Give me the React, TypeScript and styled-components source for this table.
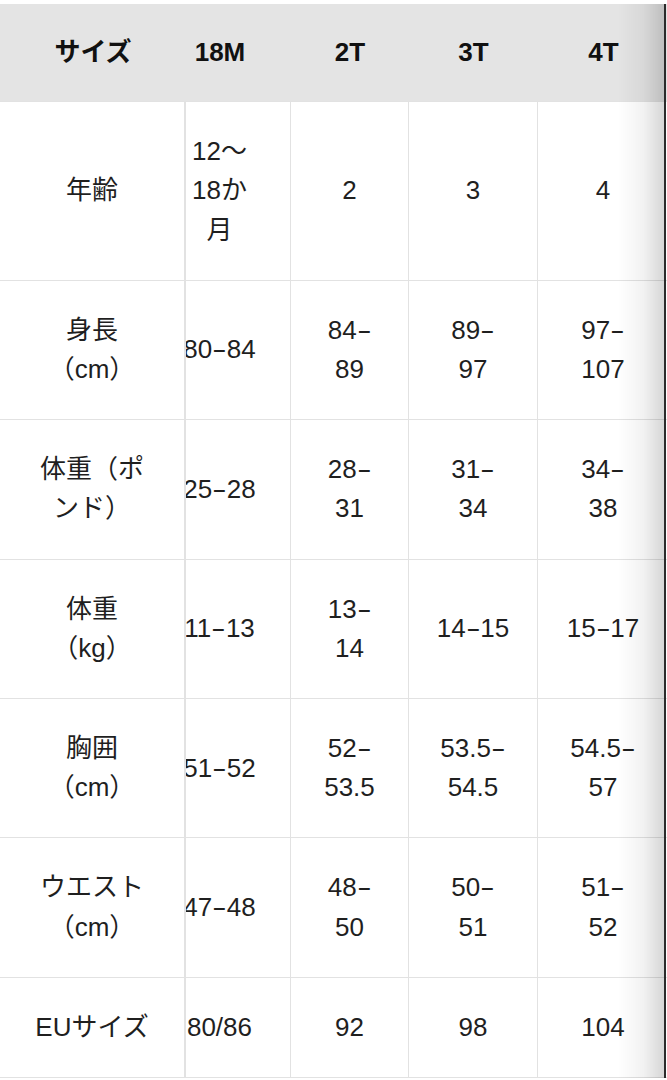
import React, { useLayoutEffect, useRef } from "react";
import styled, { createGlobalStyle, css } from "styled-components";

const GlobalStyle = createGlobalStyle`
  html, body {
    margin: 0;
    padding: 0;
    background: #ffffff;
  }
  body {
    font-family: "Liberation Sans", "Noto Sans CJK JP", sans-serif;
    color: #1f1f1f;
  }
`;

const Page = styled.div`
  padding-top: 4px;
  width: 667px;
`;

const Frame = styled.div`
  position: relative;
  width: 667px;
`;

const Scroller = styled.div`
  overflow-x: auto;
  overflow-y: hidden;
  scrollbar-width: none;
  &::-webkit-scrollbar {
    display: none;
  }
`;

const Table = styled.table`
  table-layout: fixed;
  width: 706px;
  border-collapse: separate;
  border-spacing: 0;
  font-size: 26px;
  line-height: 39.2px;
`;

const stickyCol = css`
  position: sticky;
  left: 0;
  z-index: 2;
`;

const HeadCell = styled.th<{ $sticky?: boolean }>`
  background: #e4e4e4;
  color: #111111;
  font-weight: 700;
  padding: 29px 0;
  text-align: center;
  vertical-align: middle;
  white-space: nowrap;
  ${(p) => p.$sticky && stickyCol}
`;

const BodyCell = styled.td<{ $sticky?: boolean; $last?: boolean }>`
  background: #ffffff;
  padding: 30px 0;
  text-align: center;
  vertical-align: middle;
  border-top: 1px solid #e2e2e2;
  border-right: ${(p) => (p.$sticky ? "2px" : "1px")} solid #e2e2e2;
  ${(p) => p.$last && "border-bottom: 1px solid #e2e2e2;"}
  ${(p) => p.$sticky && stickyCol}
`;

const Line = styled.span`
  display: block;
  white-space: nowrap;
`;

const Dash = styled.span`
  display: inline-block;
  margin: 0 3px;
  transform: scaleX(1.7);
`;

const EdgeShade = styled.div`
  position: absolute;
  top: 0;
  right: 1px;
  bottom: 0;
  width: 46px;
  pointer-events: none;
  background: linear-gradient(
    to right,
    rgba(0, 0, 0, 0) 0%,
    rgba(0, 0, 0, 0.05) 55%,
    rgba(0, 0, 0, 0.16) 100%
  );
  border-right: 2px solid #2b2b2b;
  z-index: 3;
`;

type Row = { label: string[]; values: string[][] };

const sizes = ["18M", "2T", "3T", "4T"];

const rows: Row[] = [
  { label: ["年齢"], values: [["12〜", "18か", "月"], ["2"], ["3"], ["4"]] },
  { label: ["身長", "（cm）"], values: [["80-84"], ["84-", "89"], ["89-", "97"], ["97-", "107"]] },
  { label: ["体重（ポ", "ンド）"], values: [["25-28"], ["28-", "31"], ["31-", "34"], ["34-", "38"]] },
  { label: ["体重", "（kg）"], values: [["11-13"], ["13-", "14"], ["14-15"], ["15-17"]] },
  { label: ["胸囲", "（cm）"], values: [["51-52"], ["52-", "53.5"], ["53.5-", "54.5"], ["54.5-", "57"]] },
  { label: ["ウエスト", "（cm）"], values: [["47-48"], ["48-", "50"], ["50-", "51"], ["51-", "52"]] },
  { label: ["EUサイズ"], values: [["80/86"], ["92"], ["98"], ["104"]] },
];

const colWidths = [186, 142, 118, 129, 131];

function withDashes(text: string) {
  const parts = text.split("-");
  return parts.map((part, i) => (
    <React.Fragment key={i}>
      {part}
      {i < parts.length - 1 && <Dash>-</Dash>}
    </React.Fragment>
  ));
}

export default function App() {
  const scrollRef = useRef<HTMLDivElement>(null);

  useLayoutEffect(() => {
    if (scrollRef.current) scrollRef.current.scrollLeft = 37;
  }, []);

  return (
    <>
      <GlobalStyle />
      <Page>
        <Frame>
          <Scroller ref={scrollRef}>
            <Table>
              <colgroup>
                {colWidths.map((w, i) => (
                  <col key={i} style={{ width: w }} />
                ))}
              </colgroup>
              <thead>
                <tr>
                  <HeadCell $sticky>サイズ</HeadCell>
                  {sizes.map((s) => (
                    <HeadCell key={s}>{s}</HeadCell>
                  ))}
                </tr>
              </thead>
              <tbody>
                {rows.map((row, ri) => {
                  const last = ri === rows.length - 1;
                  return (
                    <tr key={ri}>
                      <BodyCell $sticky $last={last}>
                        {row.label.map((l, li) => (
                          <Line key={li}>{l}</Line>
                        ))}
                      </BodyCell>
                      {row.values.map((lines, ci) => (
                        <BodyCell key={ci} $last={last}>
                          {lines.map((l, li) => (
                            <Line key={li}>{withDashes(l)}</Line>
                          ))}
                        </BodyCell>
                      ))}
                    </tr>
                  );
                })}
              </tbody>
            </Table>
          </Scroller>
          <EdgeShade />
        </Frame>
      </Page>
    </>
  );
}
